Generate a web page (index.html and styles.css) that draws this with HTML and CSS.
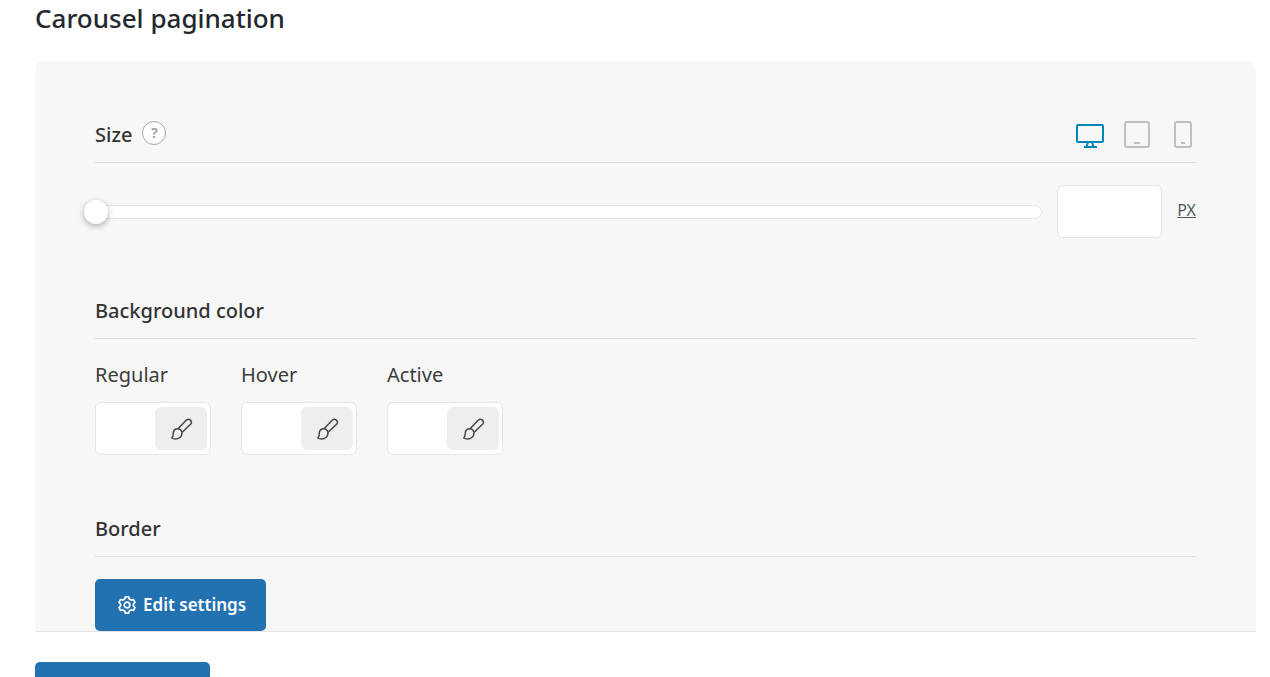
FILE: index.html
```html
<!DOCTYPE html>
<html lang="en">
<head>
	<meta charset="UTF-8">
	<meta name="viewport" content="width=device-width, initial-scale=1">
	<title>Carousel pagination</title>
	<link rel="stylesheet" href="styles.css">
</head>
<body>
	<svg class="sprite" aria-hidden="true">
		<symbol id="brush" viewBox="0 0 24 24">
			<path d="M9.300 11.600 17.400 3a3 3 0 0 1 4.400 4L13.200 15.300"/>
			<path d="M8.200 11.800c2.800-.3 5 1.800 4.800 4.600-.2 3.400-3.200 5.600-6.500 5.600-1.500 0-2.800-.3-3.800-1 1.200-.8 1.500-2 1.500-3.900 0-3 1.600-5 4-5.300z"/>
		</symbol>
	</svg>

	<h2 class="title">Carousel pagination</h2>

	<form class="panel">
		<div class="field">
			<div class="field-head">
				<label class="field-name" for="size">Size</label>
				<button class="help" type="button" aria-label="Help">?</button>
				<div class="devices">
					<button class="device active" type="button" aria-label="Desktop">
						<svg width="28" height="28" viewBox="0 0 28 28"><rect x="1" y="4" width="26" height="17" rx="1"/><path d="M12 21 10.500 26M16 21l1.500 5M8 26h13"/></svg>
					</button>
					<button class="device" type="button" aria-label="Tablet">
						<svg width="26" height="28" viewBox="0 0 26 28"><rect x="1" y="1" width="24" height="25" rx="2"/><path d="M10 22h6"/></svg>
					</button>
					<button class="device" type="button" aria-label="Mobile">
						<svg width="18" height="28" viewBox="0 0 18 28"><rect x="1" y="1" width="16" height="25" rx="2"/><path d="M7 22h4"/></svg>
					</button>
				</div>
			</div>
			<div class="slider-row">
				<input class="slider" type="range" min="0" max="100" value="0" aria-label="Size slider">
				<input class="box number" type="text" id="size">
				<a class="unit" href="#">PX</a>
			</div>
		</div>

		<div class="field">
			<div class="field-head">
				<h3 class="field-name">Background color</h3>
			</div>
			<div class="colors">
				<div class="color">
					<label for="regular">Regular</label>
					<div class="box picker">
						<input type="text" id="regular">
						<button type="button" aria-label="Pick regular color"><svg width="24" height="24"><use href="#brush"/></svg></button>
					</div>
				</div>
				<div class="color">
					<label for="hover">Hover</label>
					<div class="box picker">
						<input type="text" id="hover">
						<button type="button" aria-label="Pick hover color"><svg width="24" height="24"><use href="#brush"/></svg></button>
					</div>
				</div>
				<div class="color">
					<label for="active">Active</label>
					<div class="box picker">
						<input type="text" id="active">
						<button type="button" aria-label="Pick active color"><svg width="24" height="24"><use href="#brush"/></svg></button>
					</div>
				</div>
			</div>
		</div>

		<div class="field">
			<div class="field-head">
				<h3 class="field-name">Border</h3>
			</div>
			<button class="button" type="button">
				<svg width="20" height="20" viewBox="0 0 20 20"><circle cx="10" cy="10" r="2.800"/><path d="M8.400 1.800h3.200l.7 2.300 1.800 1 2.300-.6 1.600 2.800-1.600 1.700v2l1.600 1.700-1.600 2.800-2.300-.6-1.800 1-.7 2.300H8.400l-.7-2.300-1.800-1-2.300.6L2 12.700 3.600 11V9L2 7.300l1.600-2.800 2.300.6 1.800-1z"/></svg>
				Edit settings
			</button>
		</div>
	</form>

	<div class="footer">
		<button class="button save" type="button" aria-label="Save"></button>
	</div>
</body>
</html>
```

FILE: styles.css
```css
*{box-sizing:border-box;}
body{
	height:100vh;
	margin:0;
	padding:0 14px 0 35px;
	background:#fff;
	color:#3c3c3c;
	font-family:"Segoe UI","Noto Sans",sans-serif;
	font-size:20px;
	line-height:28px;
	overflow:hidden;
}
button,input{font:inherit;}
button{
	padding:0;
	border:none;
	background:none;
	cursor:pointer;
}
svg{
	display:block;
	fill:none;
	stroke:currentColor;
	stroke-width:2;
	stroke-linejoin:round;
}
.sprite{
	position:absolute;
	width:0;
	height:0;
}
.title{
	margin:0 0 24px;
	color:#23282d;
	font-size:26px;
	font-weight:500;
	line-height:37px;
}
.panel{
	display:flex;
	flex-direction:column;
	gap:57px;
	padding:58px 60px 0;
	border-radius:8px 8px 0 0;
	background:#f7f7f7;
}
.field-head{
	display:flex;
	align-items:center;
	height:44px;
	margin-bottom:22px;
	padding-bottom:12px;
	border-bottom:1px solid #dcdcdc;
}
.field-name{
	margin:0;
	color:#333;
	font-size:20px;
	font-weight:500;
}
.help{
	width:24px;
	height:24px;
	margin:0 0 3px 10px;
	border:1px solid #a5a5a5;
	border-radius:50%;
	background:#fff;
	color:#999;
	font-size:14px;
	font-weight:600;
	line-height:20px;
}
.devices{
	display:flex;
	gap:20px;
	margin-left:auto;
	padding-right:4px;
}
.device{color:#bfbfbf;}
.device:last-child{margin-left:4px;}
.device.active{color:#0085ba;}
.box{
	height:53px;
	border:1px solid #e5e5e5;
	border-radius:6px;
	background:#fff;
}
.slider-row{
	display:flex;
	align-items:center;
}
.slider{
	flex:1;
	appearance:none;
	height:14px;
	margin:0 15px 0 0;
	border:1px solid #e5e5e5;
	border-radius:7px;
	background:#fff;
}
.slider::-webkit-slider-thumb{
	appearance:none;
	width:24px;
	height:24px;
	margin-left:-12px;
	border-radius:50%;
	background:#fff;
	box-shadow:0 2px 6px rgba(0,0,0,.3);
}
.number{
	width:105px;
	padding:0 15px;
}
.unit{
	margin-left:15px;
	padding-bottom:3px;
	color:#50575e;
	font-size:16px;
}
.colors{
	display:flex;
	gap:30px;
	padding-bottom:1px;
}
.color label{
	display:block;
	margin-bottom:13px;
}
.picker{
	display:flex;
	width:116px;
	padding:4px 3px 4px 0;
}
.picker input{
	flex:1;
	min-width:0;
	padding:0 8px;
	border:none;
	background:none;
}
.picker button{
	display:flex;
	align-items:center;
	justify-content:center;
	width:52px;
	border-radius:6px;
	background:#eee;
	color:#444;
}
.picker svg{stroke-width:1.500;}
.button{
	display:flex;
	align-items:center;
	justify-content:center;
	gap:6px;
	height:52px;
	padding:0 20px 0 22px;
	border-radius:5px;
	background:#2271b1;
	color:#fff;
	font-size:17px;
	font-weight:600;
}
.button svg{stroke-width:1.700;}
.footer{
	padding:30px 0;
	border-top:1px solid #e5e5e5;
}
.save{width:175px;}
```
